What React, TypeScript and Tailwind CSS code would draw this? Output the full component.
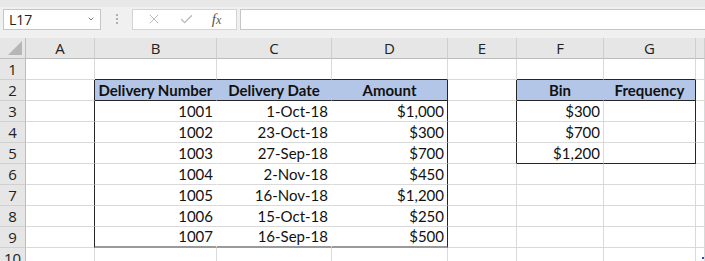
import { ChevronDown, X, Check } from 'lucide-react';

type C = {
  t?: string;
  hdr?: boolean;
  r?: string; // right border class
  b?: string; // bottom border class
  bg?: string;
  dot?: boolean;
};

const COLS = ['A', 'B', 'C', 'D', 'E', 'F', 'G', ''];
const DARK = 'border-r-[#262626]';
const DARKB = 'border-b-[#262626]';
const BLUE_R = 'border-r-[#b4c6e7]';
const WHITE_R = 'border-r-white';

const amounts = [
  ['1001', '1-Oct-18', '$1,000'],
  ['1002', '23-Oct-18', '$300'],
  ['1003', '27-Sep-18', '$700'],
  ['1004', '2-Nov-18', '$450'],
  ['1005', '16-Nov-18', '$1,200'],
  ['1006', '15-Oct-18', '$250'],
  ['1007', '16-Sep-18', '$500'],
];
const bins = ['$300', '$700', '$1,200'];

function buildRows(): C[][] {
  const rows: C[][] = [];
  // row 1
  rows.push([{}, { b: DARKB }, { b: DARKB }, { b: DARKB }, {}, { b: DARKB }, { b: DARKB }, {}]);
  // row 2 header
  rows.push([
    { r: DARK },
    { t: 'Delivery Number', hdr: true, r: BLUE_R, b: DARKB, bg: 'bg-[#b4c6e7]' },
    { t: 'Delivery Date', hdr: true, r: BLUE_R, b: DARKB, bg: 'bg-[#b4c6e7]' },
    { t: 'Amount', hdr: true, r: DARK, b: DARKB, bg: 'bg-[#b4c6e7]' },
    { r: DARK },
    { t: 'Bin', hdr: true, r: BLUE_R, b: DARKB, bg: 'bg-[#b4c6e7]' },
    { t: 'Frequency', hdr: true, r: DARK, b: DARKB, bg: 'bg-[#b4c6e7]' },
    {},
  ]);
  amounts.forEach((a, i) => {
    const last = i === amounts.length - 1;
    const bb = last ? 'border-b-2 border-b-[#9a9a9a]' : '';
    const bin = i < bins.length;
    const binLast = i === bins.length - 1;
    rows.push([
      { r: DARK },
      { t: a[0], r: WHITE_R, b: bb },
      { t: a[1], r: WHITE_R, b: bb },
      { t: a[2], r: DARK, b: bb },
      { r: bin ? DARK : '' },
      { t: bin ? bins[i] : '', b: binLast ? DARKB : '' },
      { r: bin ? DARK : '', b: binLast ? DARKB : '' },
      {},
    ]);
  });
  rows.push([{}, {}, {}, {}, {}, {}, {}, { dot: true }]);
  return rows;
}

function Cell({ c }: { c: C }) {
  return (
    <div
      className={`relative h-[21px] border-r border-b border-[#d9d9d9] flex items-end pb-[1px] text-[15px] leading-[18px] text-[#111] overflow-hidden whitespace-nowrap ${
        c.hdr ? 'justify-center font-bold' : 'justify-end pr-[3px]'
      } ${c.r ?? ''} ${c.b ?? ''} ${c.bg ?? 'bg-white'}`}
    >
      {c.t}
      {c.dot && <span className="absolute left-[6px] top-[9px] w-[2px] h-[2px] bg-[#2b3fd6]" />}
    </div>
  );
}

export default function App() {
  const rows = buildRows();
  return (
    <div className="w-[705px] h-[261px] overflow-hidden bg-[#f0f0f0] font-['Lato','Liberation_Sans',sans-serif]">
      {/* formula bar */}
      <div className="flex items-center h-[38px] pt-[1px] pb-[8px] border-t-[7px] border-[#e8e8e8] border-b-0 bg-[#f0f0f0]">
        <div className="ml-[3px] w-[98px] h-[21px] bg-white border border-[#c6c6c6] flex items-center justify-between pl-[5px] pr-[5px] font-['Open_Sans',sans-serif] text-[14px] text-[#222]">
          <span>L17</span>
          <ChevronDown className="w-[8px] h-[8px] text-[#777]" strokeWidth={3} />
        </div>
        <div className="w-[31px] flex flex-col items-center gap-[2px]">
          <span className="w-[2px] h-[2px] bg-[#b0b0b0]" />
          <span className="w-[2px] h-[2px] bg-[#b0b0b0]" />
          <span className="w-[2px] h-[2px] bg-[#b0b0b0]" />
        </div>
        <div className="w-[105px] h-[21px] bg-white border border-[#d4d4d4] flex items-center justify-around pl-[4px] pr-[6px]">
          <X className="w-[16px] h-[16px] text-[#b0b0b0]" strokeWidth={1.3} />
          <Check className="w-[15px] h-[15px] text-[#b8b8b8]" strokeWidth={2.2} />
          <span className="font-['Liberation_Serif',serif] italic text-[15px] text-[#555] leading-none">
            f<span className="text-[12px]">x</span>
          </span>
        </div>
        <div className="ml-[3px] flex-1 h-[21px] bg-white border border-[#c6c6c6] border-r-0" />
      </div>

      {/* sheet */}
      <div className="grid grid-cols-[26px_69px_122px_115px_116px_69px_87px_92px_9px] auto-rows-[21px]">
        {/* corner */}
        <div className="h-[21px] bg-[#e6e6e6] border-r border-b border-[#bdbdbd] flex items-end justify-end p-[3px]">
          <svg width="14" height="14" viewBox="0 0 14 14">
            <polygon points="14,0 14,14 0,14" fill="#b6b6b6" />
          </svg>
        </div>
        {COLS.map((l, i) => (
          <div
            key={i}
            className="h-[21px] bg-[#e6e6e6] border-r border-b border-r-[#cfcfcf] border-b-[#bdbdbd] flex items-center justify-center text-[15px] text-[#222] font-['Open_Sans',sans-serif]"
          >
            {l}
          </div>
        ))}
        {rows.map((row, ri) => [
          <div
            key={`h${ri}`}
            className="h-[21px] bg-[#e6e6e6] border-r border-b border-r-[#bdbdbd] border-b-[#d0d0d0] flex items-end justify-center pb-[1px] text-[15px] leading-[18px] text-[#222] font-['Open_Sans',sans-serif]"
          >
            {ri + 1}
          </div>,
          ...row.map((c, ci) => <Cell key={`${ri}-${ci}`} c={c} />),
        ])}
      </div>
    </div>
  );
}
